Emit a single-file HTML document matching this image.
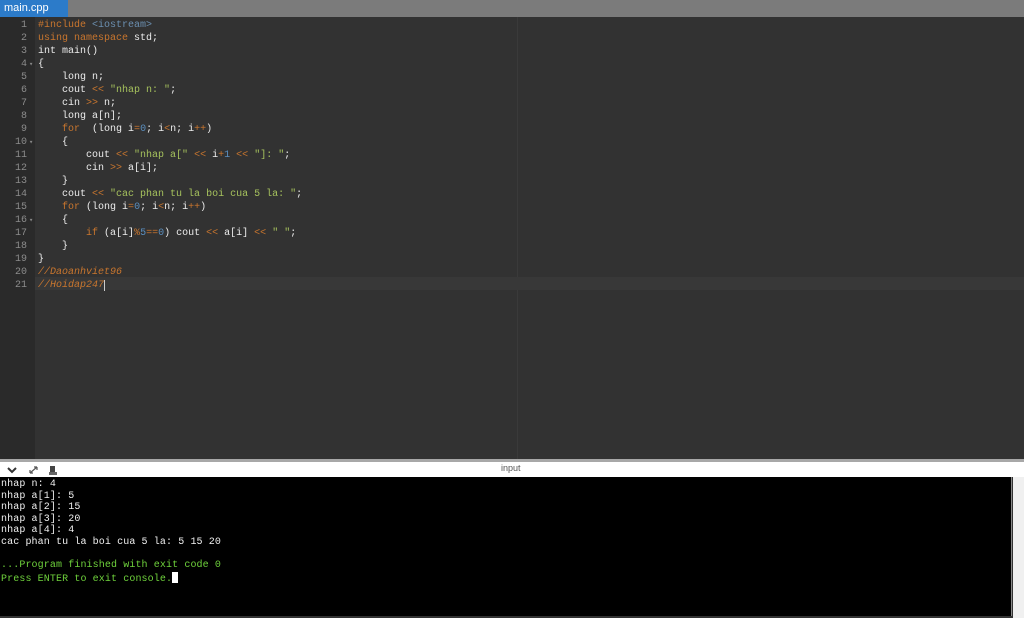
<!DOCTYPE html>
<html><head><meta charset="utf-8"><style>
*{margin:0;padding:0;box-sizing:border-box}
body{width:1024px;height:618px;overflow:hidden;background:#333;position:relative;font-family:"Liberation Mono",monospace}
#tabbar{position:absolute;left:0;top:0;width:1024px;height:17px;background:#7b7b7b}
#tab{position:absolute;left:0;top:0;width:68px;height:17px;background:#2c7bc9;color:#fff;font:11px "Liberation Sans",sans-serif;line-height:16px;padding-left:4px}
#ed{position:absolute;left:0;top:17px;width:1024px;height:442px;background:#323232}
#gut{position:absolute;left:0;top:0;width:35px;height:442px;background:#2a2a2a}
#margin{position:absolute;left:517px;top:0;width:1px;height:442px;background:#3a3a3a}
#active{position:absolute;left:35px;top:260px;width:989px;height:13px;background:#383838}
#lines{position:absolute;left:0;top:2px;width:1024px}
.ln{position:absolute;left:0;width:27px;text-align:right;color:#8c8c8c;font-size:10px;line-height:13px}
.cl{position:absolute;left:38px;color:#ececec;font-size:10px;line-height:13px;white-space:pre}
.k{color:#c9762e}.s{color:#a6c25d}.n{color:#5b8fc0}.c{color:#c9762e;font-style:italic}.t{color:#6b8fb0}
.f{position:absolute;left:29px;color:#888;font-size:7px}
#div{position:absolute;left:0;top:459px;width:1024px;height:3px;background:#a8a8a8}
#thead{position:absolute;left:0;top:462px;width:1024px;height:15px;background:#fff}
#thead .lab{position:absolute;left:501px;top:1px;font:9px "Liberation Sans",sans-serif;color:#555}
#term{position:absolute;left:0;top:477px;width:1012px;height:139px;background:#000;border-right:1px solid #888}
#sb{position:absolute;left:1013px;top:477px;width:11px;height:141px;background:#f0f0f0}
#term pre{position:absolute;left:1px;top:2px;font:10px "Liberation Mono",monospace;letter-spacing:0.11px;line-height:11.6px;color:#f0f0f0}
.g{color:#6fd23c}
.cur{display:inline-block;width:6px;height:11px;background:#fff;vertical-align:-2px}
</style></head><body>
<div id="tabbar"><div id="tab">main.cpp</div></div>
<div id="ed">
<div id="gut"></div><div id="margin"></div><div id="active"></div>
<div id="lines">
<div class="ln" style="top:0">1</div><div class="ln" style="top:13px">2</div><div class="ln" style="top:26px">3</div><div class="ln" style="top:39px">4</div><div class="ln" style="top:52px">5</div><div class="ln" style="top:65px">6</div><div class="ln" style="top:78px">7</div><div class="ln" style="top:91px">8</div><div class="ln" style="top:104px">9</div><div class="ln" style="top:117px">10</div><div class="ln" style="top:130px">11</div><div class="ln" style="top:143px">12</div><div class="ln" style="top:156px">13</div><div class="ln" style="top:169px">14</div><div class="ln" style="top:182px">15</div><div class="ln" style="top:195px">16</div><div class="ln" style="top:208px">17</div><div class="ln" style="top:221px">18</div><div class="ln" style="top:234px">19</div><div class="ln" style="top:247px">20</div><div class="ln" style="top:260px">21</div>
<div class="f" style="top:41px">▾</div><div class="f" style="top:119px">▾</div><div class="f" style="top:197px">▾</div>
<div class="cl" style="top:0"><span class="k">#include</span> <span class="t">&lt;iostream&gt;</span></div>
<div class="cl" style="top:13px"><span class="k">using namespace</span> std;</div>
<div class="cl" style="top:26px">int main()</div>
<div class="cl" style="top:39px">{</div>
<div class="cl" style="top:52px">    long n;</div>
<div class="cl" style="top:65px">    cout <span class="k">&lt;&lt;</span> <span class="s">"nhap n: "</span>;</div>
<div class="cl" style="top:78px">    cin <span class="k">&gt;&gt;</span> n;</div>
<div class="cl" style="top:91px">    long a[n];</div>
<div class="cl" style="top:104px">    <span class="k">for</span>  (long i<span class="k">=</span><span class="n">0</span>; i<span class="k">&lt;</span>n; i<span class="k">++</span>)</div>
<div class="cl" style="top:117px">    {</div>
<div class="cl" style="top:130px">        cout <span class="k">&lt;&lt;</span> <span class="s">"nhap a["</span> <span class="k">&lt;&lt;</span> i<span class="k">+</span><span class="n">1</span> <span class="k">&lt;&lt;</span> <span class="s">"]: "</span>;</div>
<div class="cl" style="top:143px">        cin <span class="k">&gt;&gt;</span> a[i];</div>
<div class="cl" style="top:156px">    }</div>
<div class="cl" style="top:169px">    cout <span class="k">&lt;&lt;</span> <span class="s">"cac phan tu la boi cua 5 la: "</span>;</div>
<div class="cl" style="top:182px">    <span class="k">for</span> (long i<span class="k">=</span><span class="n">0</span>; i<span class="k">&lt;</span>n; i<span class="k">++</span>)</div>
<div class="cl" style="top:195px">    {</div>
<div class="cl" style="top:208px">        <span class="k">if</span> (a[i]<span class="k">%</span><span class="n">5</span><span class="k">==</span><span class="n">0</span>) cout <span class="k">&lt;&lt;</span> a[i] <span class="k">&lt;&lt;</span> <span class="s">" "</span>;</div>
<div class="cl" style="top:221px">    }</div>
<div class="cl" style="top:234px">}</div>
<div class="cl" style="top:247px"><span class="c">//Daoanhviet96</span></div>
<div class="cl" style="top:260px"><span class="c">//Hoidap247</span><span style="border-left:1px solid #ccc"> </span></div>
</div>
</div>
<div id="div"></div>
<div id="thead">
<svg style="position:absolute;left:6px;top:3px" width="54" height="11"><path d="M2 3l4 4 4-4" stroke="#333" stroke-width="2" fill="none"/><path d="M24 8l7-6M24 8v-3M24 8h3M31 2h-3M31 2v3" stroke="#555" stroke-width="1.2" fill="none"/><rect x="44" y="1" width="5" height="6" fill="#444"/><rect x="43" y="7" width="8" height="3" fill="#666"/></svg>
<span class="lab">input</span></div>
<div id="term"><pre>nhap n: 4
nhap a[1]: 5
nhap a[2]: 15
nhap a[3]: 20
nhap a[4]: 4
cac phan tu la boi cua 5 la: 5 15 20

<span class="g">...Program finished with exit code 0
Press ENTER to exit console.</span><span class="cur"></span></pre></div>
<div id="sb"></div>
</body></html>
